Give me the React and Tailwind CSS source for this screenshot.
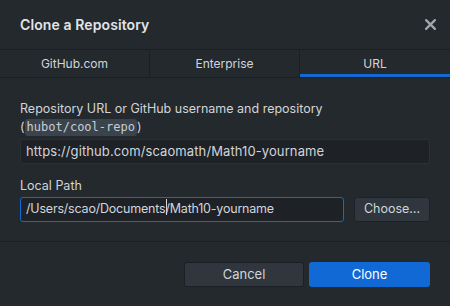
export default function App() {
  const font = { fontFamily: 'Inter, "Liberation Sans", sans-serif' };
  return (
    <div
      className="w-[450px] h-[306px] bg-[#24292e] text-[#d1d5da] flex flex-col overflow-hidden"
      style={font}
    >
      <header className="h-[50px] shrink-0 flex items-center justify-between pl-5 pr-[10px] border-b border-[#1b1f23]">
        <h1 className="text-[14px] font-semibold text-[#e1e4e8] tracking-[0.1px]">Clone a Repository</h1>
        <button className="w-[20px] h-[20px] flex items-center justify-center text-[#a0a7ae]">
          <svg width="11" height="11" viewBox="0 0 10 10">
            <path d="M1 1 L9 9 M9 1 L1 9" stroke="currentColor" strokeWidth="2" strokeLinecap="round" />
          </svg>
        </button>
      </header>

      <div className="h-[28px] shrink-0 flex border-b border-[#1b1f23] text-[12px] text-[#d1d5da]">
        <div className="w-[150px] flex items-center justify-center border-r border-[#1b1f23]">GitHub.com</div>
        <div className="w-[150px] flex items-center justify-center border-r border-[#1b1f23]">Enterprise</div>
        <div className="flex-1 flex items-center justify-center border-b-[3px] border-[#1169d6] pt-[3px]">URL</div>
      </div>

      <div className="flex-1 px-5 pt-[22px] flex flex-col">
        <div className="text-[12.5px] leading-[18px] text-[#d1d5da]">
          Repository URL or GitHub username and repository
          <br />(<code className="inline-block align-middle bg-[#3b434c] rounded-[3px] px-[2px] leading-[17px] text-[12px] text-[#c9ced3]" style={{ fontFamily: '"DejaVu Sans Mono", monospace' }}>hubot/cool-repo</code>)
        </div>
        <div className="mt-[3px] h-[25px] w-[410px] bg-[#1e2227] border border-[#2b3036] rounded-[3px] flex items-center px-[5px] text-[13px] tracking-[0.1px] text-[#d1d5da]">
          https://github.com/scaomath/Math10-yourname
        </div>

        <div className="mt-[13px] text-[12.5px] text-[#d1d5da] leading-[17px]">Local Path</div>
        <div className="mt-[3px] flex gap-[10px]">
          <div className="h-[25px] w-[324px] bg-[#1e2227] border border-[#1169d6] rounded-[3px] flex items-center px-[5px] text-[12.5px] tracking-[-0.2px] text-[#d1d5da]">
            /Users/scao/Documents<span className="relative">/<span className="absolute left-[1px] top-[-1px] w-px h-[16px] bg-[#d1d5da]"></span></span>Math10-yourname
          </div>
          <button className="h-[25px] w-[76px] bg-[#2f363d] border border-[#1e2227] rounded-[3px] text-[12.5px] text-[#d1d5da] flex items-center justify-center">
            Choose…
          </button>
        </div>
      </div>

      <footer className="h-[65px] shrink-0 border-t border-[#1b1f23] flex justify-end items-start pt-[20px] pr-5 gap-[5px]">
        <button className="h-[25px] w-[120px] bg-[#2f363d] border border-[#1b1f23] rounded-[3px] text-[13px] text-[#d1d5da] flex items-center justify-center">
          Cancel
        </button>
        <button className="h-[25px] w-[121px] bg-[#1169d6] rounded-[3px] text-[13px] text-white flex items-center justify-center">
          Clone
        </button>
      </footer>
    </div>
  );
}
